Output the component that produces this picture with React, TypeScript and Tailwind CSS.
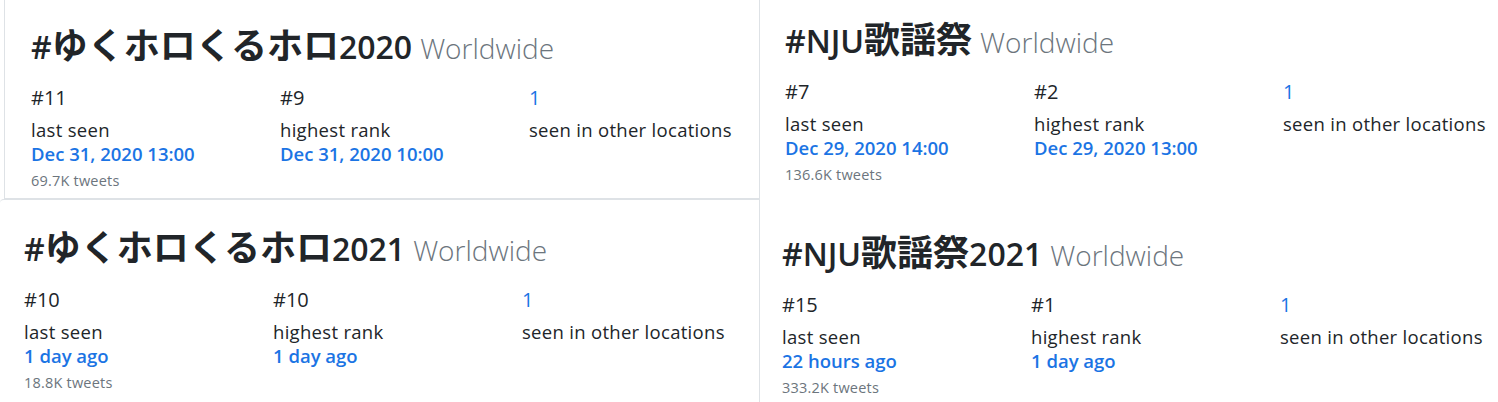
import React from "react"

type Trend = {
  tag: [string, string, string]
  rank: string
  best: string
  lastSeen: string
  bestAt: string
  tweets: string
}

const font = { fontFamily: '"Open Sans", "Noto Sans CJK JP", sans-serif' }

function TrendCard({ t, className }: { t: Trend; className: string }) {
  return (
    <div className={className}>
      <h2 className="h-[38px] flex items-baseline text-[32px] leading-[38px] font-semibold text-[#212529] whitespace-nowrap">
        <span>{t.tag[0]}</span>
        <span className="text-[36px] leading-[38px] font-bold" style={{ fontFamily: '"Noto Sans CJK JP", sans-serif' }}>{t.tag[1]}</span>
        <span>{t.tag[2]}</span>
        <span className="ml-[8px] text-[28px] font-light text-[#6c757d]">Worldwide</span>
      </h2>
      <div className="mt-[24px] grid grid-cols-3 w-[747px]">
        <div>
          <div className="text-[20px] leading-[24px] font-medium text-[#212529]">{t.rank}</div>
          <div className="mt-2 text-[18.5px] leading-[24px] tracking-[0.3px] text-[#212529]">last seen</div>
          <div className="text-[18.5px] leading-[24px] font-semibold text-[#1b74e4]">{t.lastSeen}</div>
          <div className="mt-[4px] text-[14.5px] leading-[21px] tracking-[0.2px] text-[#6c757d]">{t.tweets} tweets</div>
        </div>
        <div>
          <div className="text-[20px] leading-[24px] font-medium text-[#212529]">{t.best}</div>
          <div className="mt-2 text-[18.5px] leading-[24px] tracking-[0.3px] text-[#212529]">highest rank</div>
          <div className="text-[18.5px] leading-[24px] font-semibold text-[#1b74e4]">{t.bestAt}</div>
        </div>
        <div>
          <div className="text-[20px] leading-[24px] text-[#1b74e4]">1</div>
          <div className="mt-2 text-[18.5px] leading-[24px] tracking-[0.3px] text-[#212529]">seen in other locations</div>
        </div>
      </div>
    </div>
  )
}

export default function App() {
  const trends: Trend[] = [
    { tag: ["#", "ゆくホロくるホロ", "2020"], rank: "#11", best: "#9", lastSeen: "Dec 31, 2020 13:00", bestAt: "Dec 31, 2020 10:00", tweets: "69.7K" },
    { tag: ["#", "ゆくホロくるホロ", "2021"], rank: "#10", best: "#10", lastSeen: "1 day ago", bestAt: "1 day ago", tweets: "18.8K" },
    { tag: ["#NJU", "歌謡祭", ""], rank: "#7", best: "#2", lastSeen: "Dec 29, 2020 14:00", bestAt: "Dec 29, 2020 13:00", tweets: "136.6K" },
    { tag: ["#NJU", "歌謡祭", "2021"], rank: "#15", best: "#1", lastSeen: "22 hours ago", bestAt: "1 day ago", tweets: "333.2K" },
  ]

  return (
    <div className="w-[1498px] h-[402px] overflow-hidden bg-white flex" style={font}>
      <div className="w-[759px] shrink-0 flex flex-col">
        <TrendCard t={trends[0]} className="ml-[4px] h-[199px] border-l border-b border-[#dee2e6] pl-[26px] pt-[24px] overflow-hidden" />
        <TrendCard t={trends[1]} className="flex-1 border-t border-[#dee2e6] rounded-tl-[4px] pl-[24px] pt-[26px] overflow-hidden" />
      </div>
      <div className="flex-1 border-l border-[#dee2e6] flex flex-col">
        <TrendCard t={trends[2]} className="h-[212px] pl-[25px] pt-[18px] overflow-hidden" />
        <TrendCard t={trends[3]} className="flex-1 pl-[22px] pt-[19px] overflow-hidden" />
      </div>
    </div>
  )
}
